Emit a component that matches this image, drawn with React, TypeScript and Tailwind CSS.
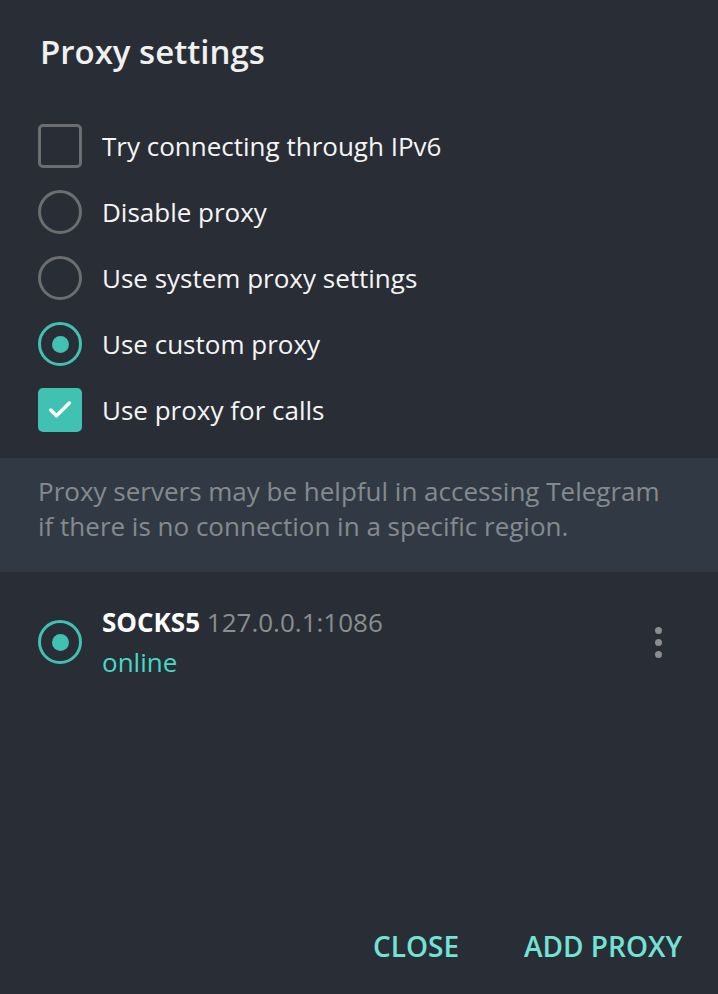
import { Check } from 'lucide-react'

function Radio({ checked }: { checked?: boolean }) {
  return (
    <div
      className={`w-[44px] h-[44px] rounded-full border-[3.5px] flex items-center justify-center shrink-0 ${
        checked ? 'border-[#40c1b1]' : 'border-[#6c6d70]'
      }`}
    >
      {checked && <div className="w-[17px] h-[17px] rounded-full bg-[#40c1b1]" />}
    </div>
  )
}

function Checkbox({ checked }: { checked?: boolean }) {
  return checked ? (
    <div className="w-[44px] h-[44px] rounded-[5px] bg-[#40c1b1] flex items-center justify-center shrink-0">
      <Check className="text-white" size={28} strokeWidth={3} />
    </div>
  ) : (
    <div className="w-[44px] h-[44px] rounded-[5px] border-[3.5px] border-[#6c6d70] shrink-0" />
  )
}

export default function App() {
  const options = [
    { label: 'Try connecting through IPv6', kind: 'check', checked: false },
    { label: 'Disable proxy', kind: 'radio', checked: false },
    { label: 'Use system proxy settings', kind: 'radio', checked: false },
    { label: 'Use custom proxy', kind: 'radio', checked: true },
    { label: 'Use proxy for calls', kind: 'check', checked: true },
  ]

  return (
    <div
      className="w-[718px] h-[994px] bg-[#292d35] flex flex-col text-white"
      style={{ fontFamily: '"Open Sans", sans-serif' }}
    >
      <h1 className="px-[40px] pt-[30px] text-[33px] font-semibold text-[#f0f0f0] leading-[44px]">
        Proxy settings
      </h1>

      {/* options */}
      <div className="mt-[39px] px-[38px] flex flex-col">
        {options.map((o) => (
          <div key={o.label} className="h-[66px] flex items-center gap-[20px]">
            {o.kind === 'check' ? <Checkbox checked={o.checked} /> : <Radio checked={o.checked} />}
            <span className="text-[26px] leading-[36px] text-[#f5f5f5]">{o.label}</span>
          </div>
        ))}
      </div>

      {/* info */}
      <div className="mt-[15px] h-[114px] bg-[#313a44] px-[38px] pt-[16px] text-[26px] leading-[35px] text-[#858a90]">
        Proxy servers may be helpful in accessing Telegram
        <br />
        if there is no connection in a specific region.
      </div>

      {/* proxy list */}
      <div className="mt-[30px] px-[38px] flex items-center">
        <Radio checked />
        <div className="ml-[20px] flex flex-col flex-1">
          <div className="text-[26px] leading-[40px]">
            <span className="font-bold text-white">SOCKS5</span>{' '}
            <span className="text-[#8b8e92]">127.0.0.1:1086</span>
          </div>
          <div className="text-[26px] leading-[40px] text-[#48d8c6]">online</div>
        </div>
        <div className="flex flex-col gap-[5px] mr-[18px]">
          <div className="w-[7px] h-[7px] rounded-full bg-[#8b8d91]" />
          <div className="w-[7px] h-[7px] rounded-full bg-[#8b8d91]" />
          <div className="w-[7px] h-[7px] rounded-full bg-[#8b8d91]" />
        </div>
      </div>

      <div className="flex-1" />

      {/* buttons */}
      <div className="flex justify-end gap-[65px] px-[36px] pb-[27px] text-[28px] font-semibold text-[#72e3d5]">
        <button>CLOSE</button>
        <button>ADD PROXY</button>
      </div>
    </div>
  )
}
